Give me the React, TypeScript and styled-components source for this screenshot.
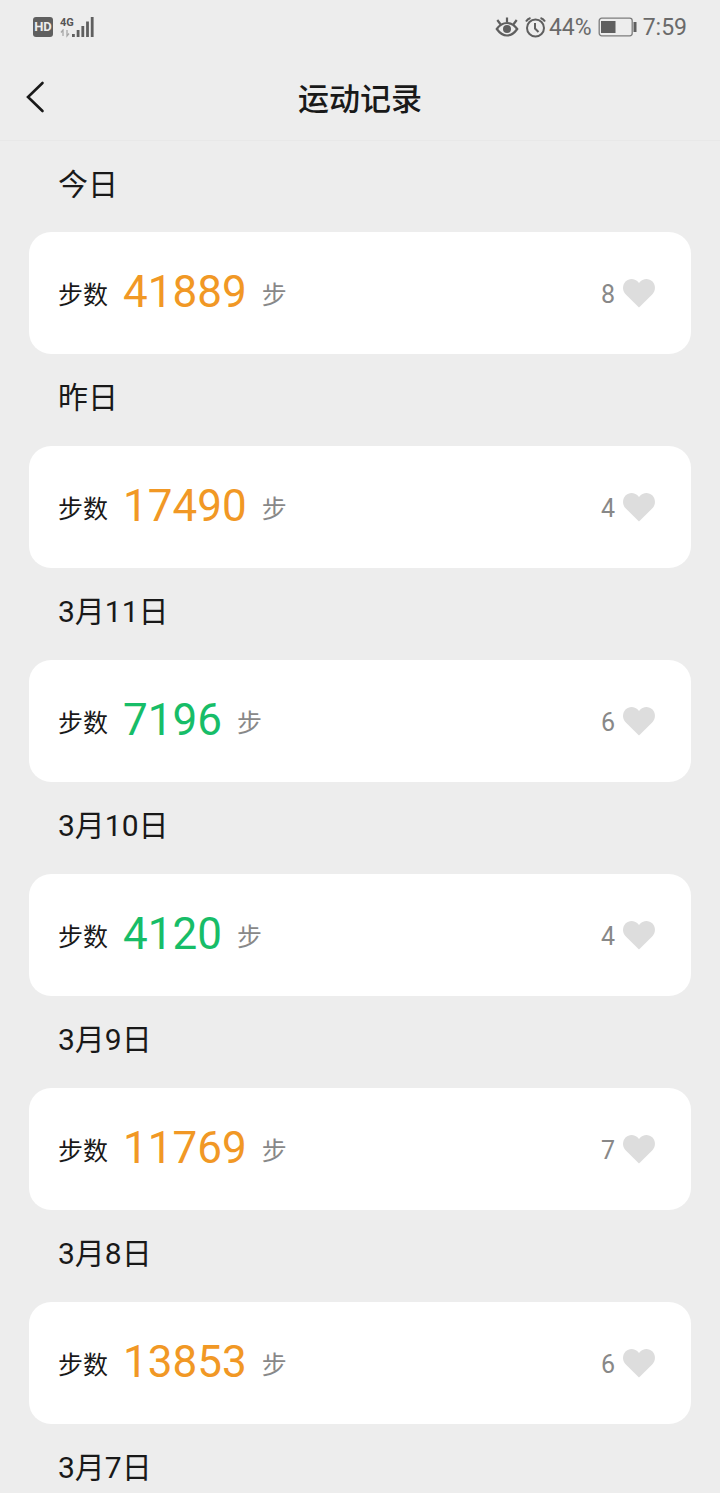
import React from 'react';
import styled, { createGlobalStyle } from 'styled-components';

const GlobalStyle = createGlobalStyle`
  * { box-sizing: border-box; }
  body {
    margin: 0;
    background: #ededed;
    color: #191919;
    font-family: Roboto, 'Noto Sans CJK SC', sans-serif;
  }
`;

const Screen = styled.div`
  display: flex;
  flex-direction: column;
  height: 100vh;
`;

const StatusBar = styled.div`
  display: flex;
  flex: none;
  align-items: center;
  justify-content: space-between;
  height: 54px;
  padding: 0 33px;
  color: #6a6a6a;
  font-size: 23px;
  line-height: 28px;
`;

const StatusGroup = styled.div`
  display: flex;
  align-items: center;
`;

const StatusText = styled.span`
  padding-top: 2px;
`;

const HdBadge = styled.span`
  width: 20px;
  height: 20px;
  margin-right: 7px;
  border-radius: 3px;
  background: #5f5f5f;
  color: #ededed;
  font-size: 13px;
  font-weight: 700;
  line-height: 20px;
  text-align: center;
`;

const Signal = styled.div`
  display: flex;
  align-items: flex-end;
`;

const Network = styled.div`
  display: flex;
  flex-direction: column;
  width: 12px;
  color: #555555;
  font-size: 11px;
  font-weight: 700;
  line-height: 12px;
`;

const StatusIcon = styled.svg`
  display: block;
  flex: none;
`;

const Battery = styled(StatusIcon)`
  margin: 0 5px 0 6px;
`;

const Alarm = styled(StatusIcon)`
  margin: 0 3px 0 6px;
`;

const NavBar = styled.header`
  display: grid;
  flex: none;
  grid-template-columns: 72px 1fr 72px;
  align-items: center;
  height: 86px;
  box-shadow: 0 1px 0 #e8e8e8;
`;

const BackButton = styled.button`
  display: flex;
  align-items: center;
  height: 86px;
  padding: 0 0 0 25px;
  border: 0;
  background: none;
  color: #191919;
`;

const Title = styled.h1`
  margin: 0;
  padding-top: 6px;
  font-size: 31px;
  font-weight: 500;
  line-height: 40px;
  text-align: center;
`;

const Records = styled.main`
  flex: 1;
  min-height: 0;
  margin-top: 1px;
  overflow-y: auto;
  scrollbar-width: none;
`;

const DayTitle = styled.h2`
  margin: 0;
  padding: 24px 58px 28px;
  font-size: 30px;
  font-weight: 400;
  line-height: 40px;
`;

const Day = styled.section`
  &:first-child ${DayTitle} {
    padding-bottom: 27px;
  }
`;

const Card = styled.div`
  display: flex;
  align-items: center;
  justify-content: space-between;
  height: 122px;
  margin: 0 29px;
  padding: 0 35px 0 29px;
  border-radius: 22px;
  background: #ffffff;
`;

const Steps = styled.div`
  display: flex;
  align-items: center;
`;

const Label = styled.span`
  padding-top: 6px;
  font-size: 25px;
  line-height: 36px;
`;

const Unit = styled(Label)`
  color: #888888;
`;

const Count = styled.span<{ $goal: boolean }>`
  margin: 0 15px;
  padding-bottom: 2px;
  color: ${(p) => (p.$goal ? '#f19825' : '#17bd68')};
  font-size: 44px;
  line-height: 52px;
`;

const LikeButton = styled.button`
  display: flex;
  align-items: center;
  gap: 7px;
  padding: 0;
  border: 0;
  background: none;
  color: #888888;
  font-family: inherit;
  font-size: 25px;
  line-height: 36px;
`;

const LikeCount = styled.span`
  padding-top: 4px;
`;

interface DayRecord {
  day: string;
  steps: number;
  likes: number;
}

const GOAL = 10000;

const days: DayRecord[] = [
  { day: '今日', steps: 41889, likes: 8 },
  { day: '昨日', steps: 17490, likes: 4 },
  { day: '3月11日', steps: 7196, likes: 6 },
  { day: '3月10日', steps: 4120, likes: 4 },
  { day: '3月9日', steps: 11769, likes: 7 },
  { day: '3月8日', steps: 13853, likes: 6 },
];

function Heart() {
  return (
    <svg width="34" height="30" viewBox="0 0 34 30" aria-hidden="true">
      <path
        d="M17 29.5 3.6 16.2C.2 12.8.2 7.2 3.5 3.6 6.9.2 12.4.2 15.7 3.6L17 4.9l1.3-1.3C21.6.2 27.1.2 30.5 3.6c3.3 3.6 3.3 9.2-.1 12.6Z"
        fill="#dddddd"
      />
    </svg>
  );
}

function DayCard({ record }: { record: DayRecord }) {
  return (
    <Day>
      <DayTitle>{record.day}</DayTitle>
      <Card>
        <Steps>
          <Label>步数</Label>
          <Count $goal={record.steps >= GOAL}>{record.steps}</Count>
          <Unit>步</Unit>
        </Steps>
        <LikeButton type="button">
          <LikeCount>{record.likes}</LikeCount>
          <Heart />
        </LikeButton>
      </Card>
    </Day>
  );
}

export default function App() {
  return (
    <>
      <GlobalStyle />
      <Screen>
        <StatusBar>
          <StatusGroup>
            <HdBadge>HD</HdBadge>
            <Signal>
              <Network>
                <span>4G</span>
                <StatusIcon width="10" height="9" viewBox="0 0 10 9" fill="none" stroke="#a8a8a8" strokeWidth="1.3">
                  <path d="M1 3.5 3 1v6M9 4.5 7 7V1" />
                </StatusIcon>
              </Network>
              <StatusIcon width="22" height="22" viewBox="0 0 22 22" fill="#5f5f5f">
                <path d="M0 18h2.8v3H0zM4.7 14h2.8v7H4.7zM9.4 10h2.8v11H9.4zM14.1 5.5h2.8V21h-2.8zM18.8 1h2.8v20h-2.8z" />
              </StatusIcon>
            </Signal>
          </StatusGroup>
          <StatusGroup>
            <StatusIcon width="24" height="22" viewBox="0 0 24 22" fill="none" stroke="#5f5f5f" strokeWidth="2.2">
              <path d="M1.8 13C5 8.5 8 7 12 7s7 1.5 10.2 6C19 17.5 16 19.5 12 19.5S5 17.5 1.8 13ZM12 1.5V6M2.3 4l3 4M21.7 4l-3 4" />
              <circle cx="12" cy="13" r="4" fill="#5f5f5f" stroke="none" />
            </StatusIcon>
            <Alarm width="21" height="22" viewBox="0 0 21 22" fill="none" stroke="#5f5f5f" strokeWidth="2">
              <circle cx="10.5" cy="12" r="8.5" />
              <path d="M10 7v5.5l3.5 3.5M1 5.5Q2.500 3 5.500 2M20 5.500Q18.500 3 15.500 2" />
            </Alarm>
            <StatusText>44%</StatusText>
            <Battery width="40" height="20" viewBox="0 0 40 20">
              <rect x="1.2" y="1.2" width="33" height="17.6" rx="2.5" fill="none" stroke="#7c7c7c" strokeWidth="1.3" />
              <path d="M3 4h14.500v12H3zM35.500 5h3v10h-3z" fill="#5f5f5f" />
            </Battery>
            <StatusText>7:59</StatusText>
          </StatusGroup>
        </StatusBar>
        <NavBar>
          <BackButton type="button" aria-label="返回">
            <svg width="22" height="32" viewBox="0 0 22 32" fill="none" stroke="currentColor" strokeWidth="2.6" strokeLinecap="round">
              <path d="M17.5 2 3 16l14.5 14" />
            </svg>
          </BackButton>
          <Title>运动记录</Title>
        </NavBar>
        <Records>
          {days.map((record) => (
            <DayCard key={record.day} record={record} />
          ))}
          <DayTitle>3月7日</DayTitle>
        </Records>
      </Screen>
    </>
  );
}
